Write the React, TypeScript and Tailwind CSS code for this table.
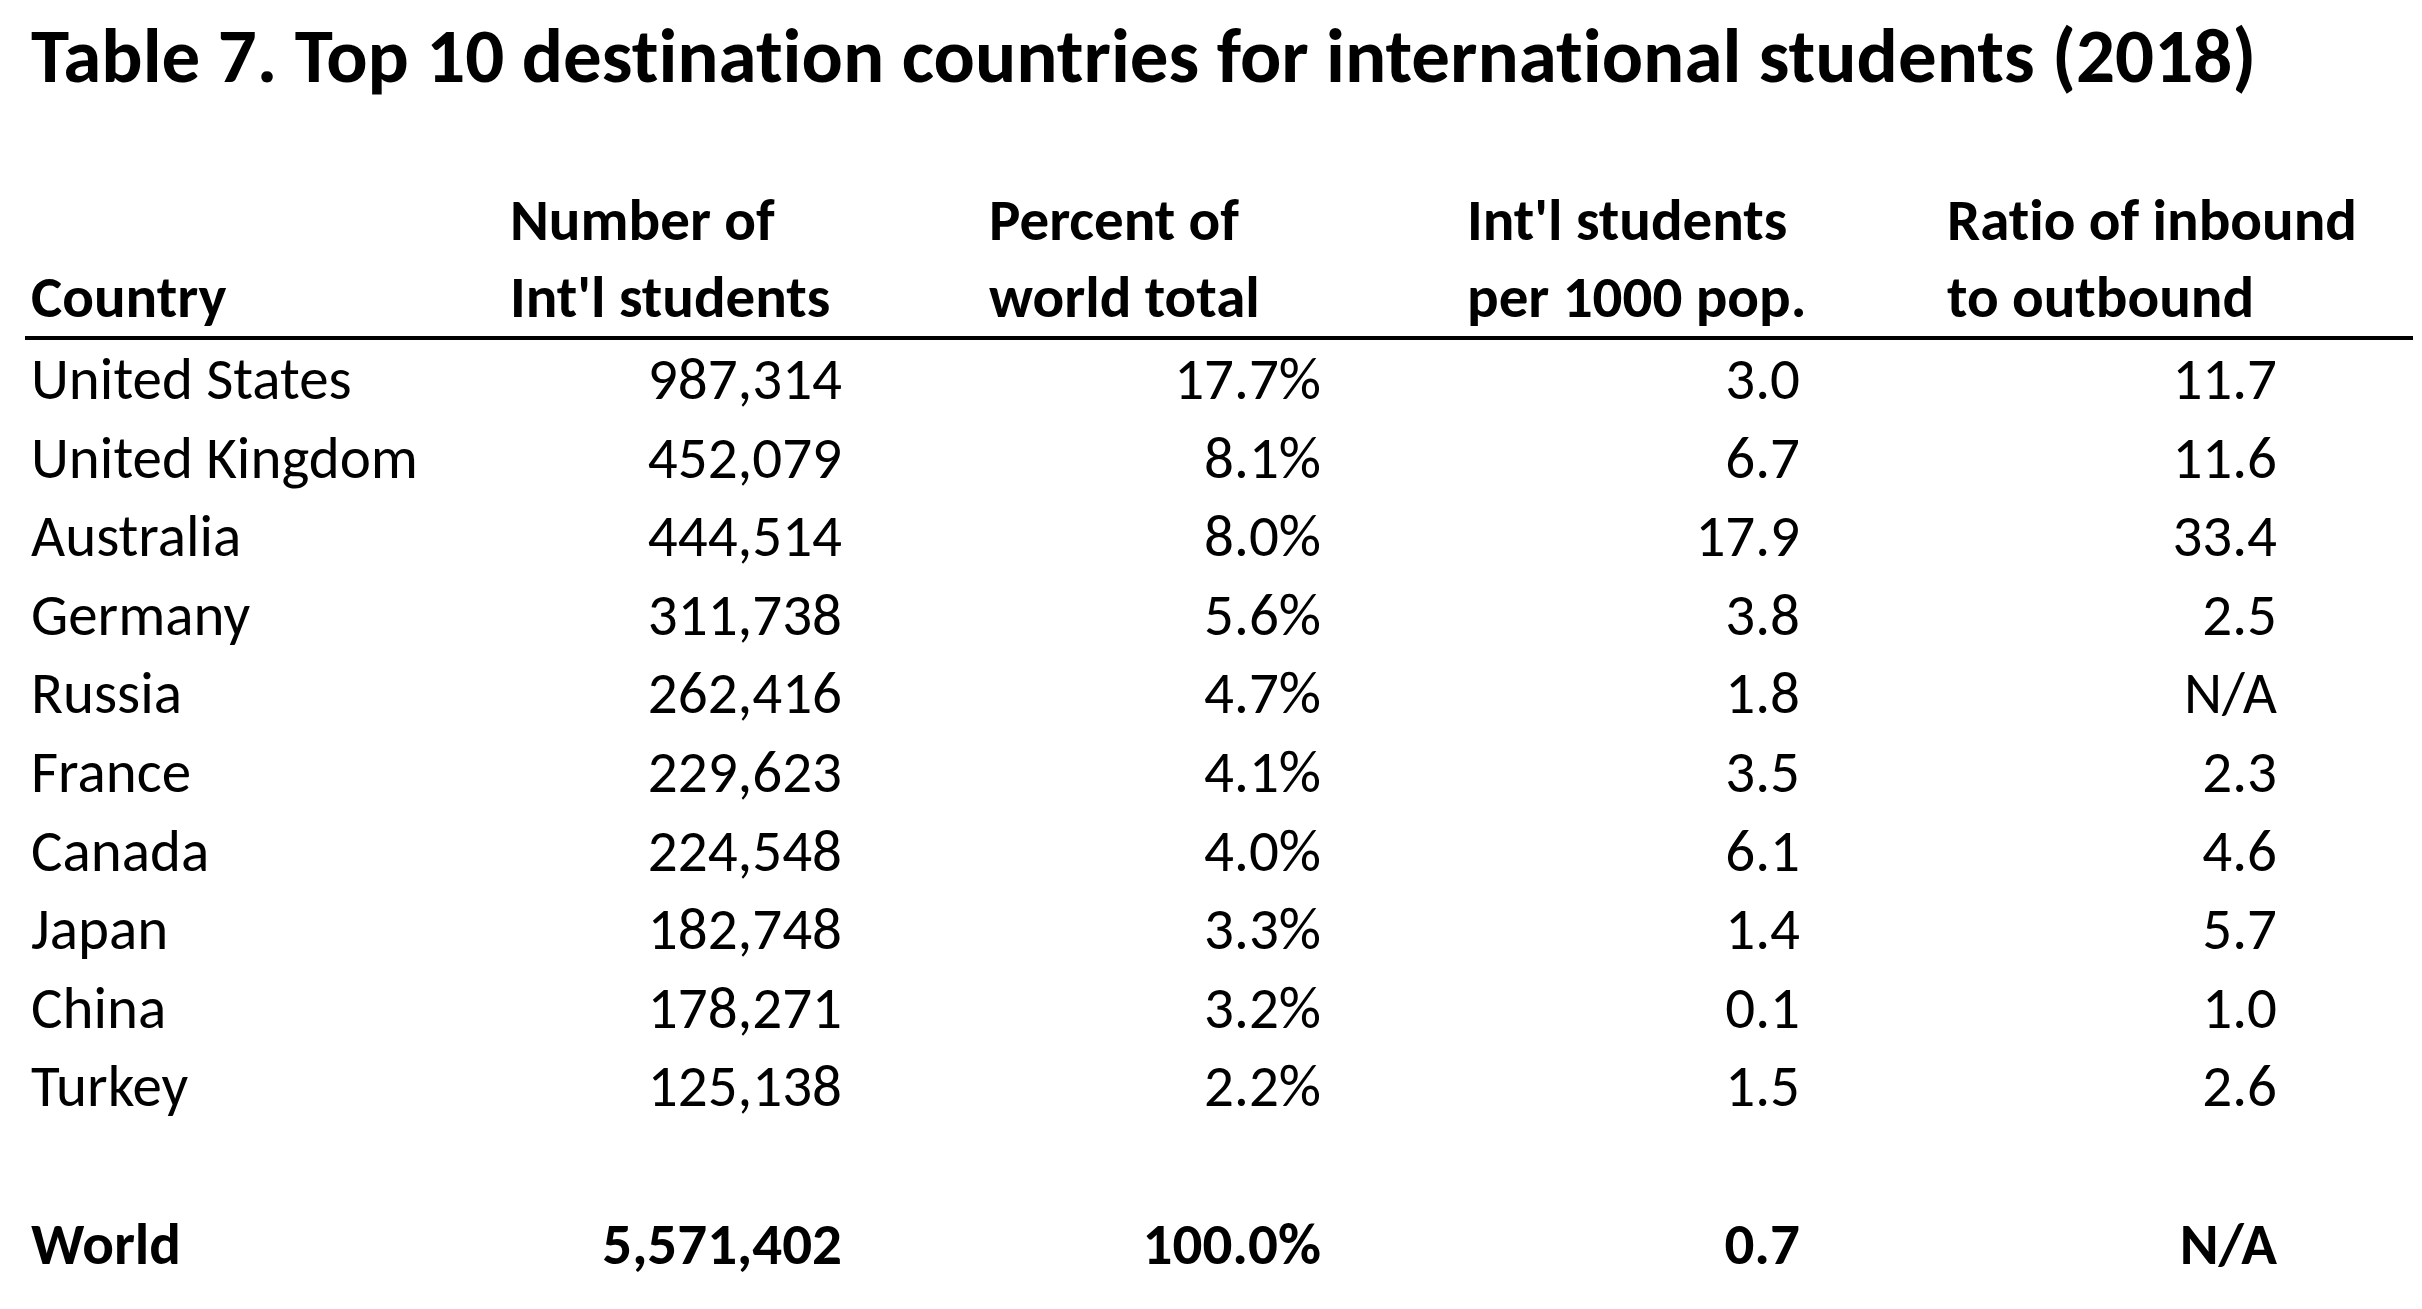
const rows: [string, string, string, string, string][] = [
  ["United States", "987,314", "17.7%", "3.0", "11.7"],
  ["United Kingdom", "452,079", "8.1%", "6.7", "11.6"],
  ["Australia", "444,514", "8.0%", "17.9", "33.4"],
  ["Germany", "311,738", "5.6%", "3.8", "2.5"],
  ["Russia", "262,416", "4.7%", "1.8", "N/A"],
  ["France", "229,623", "4.1%", "3.5", "2.3"],
  ["Canada", "224,548", "4.0%", "6.1", "4.6"],
  ["Japan", "182,748", "3.3%", "1.4", "5.7"],
  ["China", "178,271", "3.2%", "0.1", "1.0"],
  ["Turkey", "125,138", "2.2%", "1.5", "2.6"],
];

const grid = "grid grid-cols-[479px_479px_479px_479px_472px]";

function Row({ cells, bold }: { cells: string[]; bold?: boolean }) {
  return (
    <div className={`${grid} h-[78.6px] items-center ${bold ? "font-bold" : ""}`}>
      <div className="pl-[6px]">{cells[0]}</div>
      <div className="pr-[141px] text-right">{cells[1]}</div>
      <div className="pr-[141px] text-right">{cells[2]}</div>
      <div className="pr-[141px] text-right">{cells[3]}</div>
      <div className="pr-[136px] text-right">{cells[4]}</div>
    </div>
  );
}

export default function App() {
  return (
    <div className="min-h-screen bg-white text-black font-['Carlito','Calibri','Lato',sans-serif] [font-variant-ligatures:none]">
      <h1 className="h-[182px] pl-[31px] pt-[11px] text-[77px] font-bold leading-[90px]">
        Table 7. Top 10 destination countries for international students (2018)
      </h1>

      <div className="ml-[25px] w-[2388px] text-[59px] leading-[78.6px]">
        {/* header */}
        <div className={`${grid} border-b-[4px] border-black font-bold leading-[77px]`}>
          <div className="flex items-end pl-[6px]">Country</div>
          <div className="pl-[6px]">
            Number of
            <br />
            Int'l students
          </div>
          <div className="pl-[6px]">
            Percent of
            <br />
            world total
          </div>
          <div className="pl-[5px]">
            Int'l students
            <br />
            per 1000 pop.
          </div>
          <div className="pl-[6px]">
            Ratio of inbound
            <br />
            to outbound
          </div>
        </div>

        {rows.map((r) => (
          <Row key={r[0]} cells={r} />
        ))}
        <div className="h-[78.6px]" />
        <Row cells={["World", "5,571,402", "100.0%", "0.7", "N/A"]} bold />
      </div>
    </div>
  );
}
